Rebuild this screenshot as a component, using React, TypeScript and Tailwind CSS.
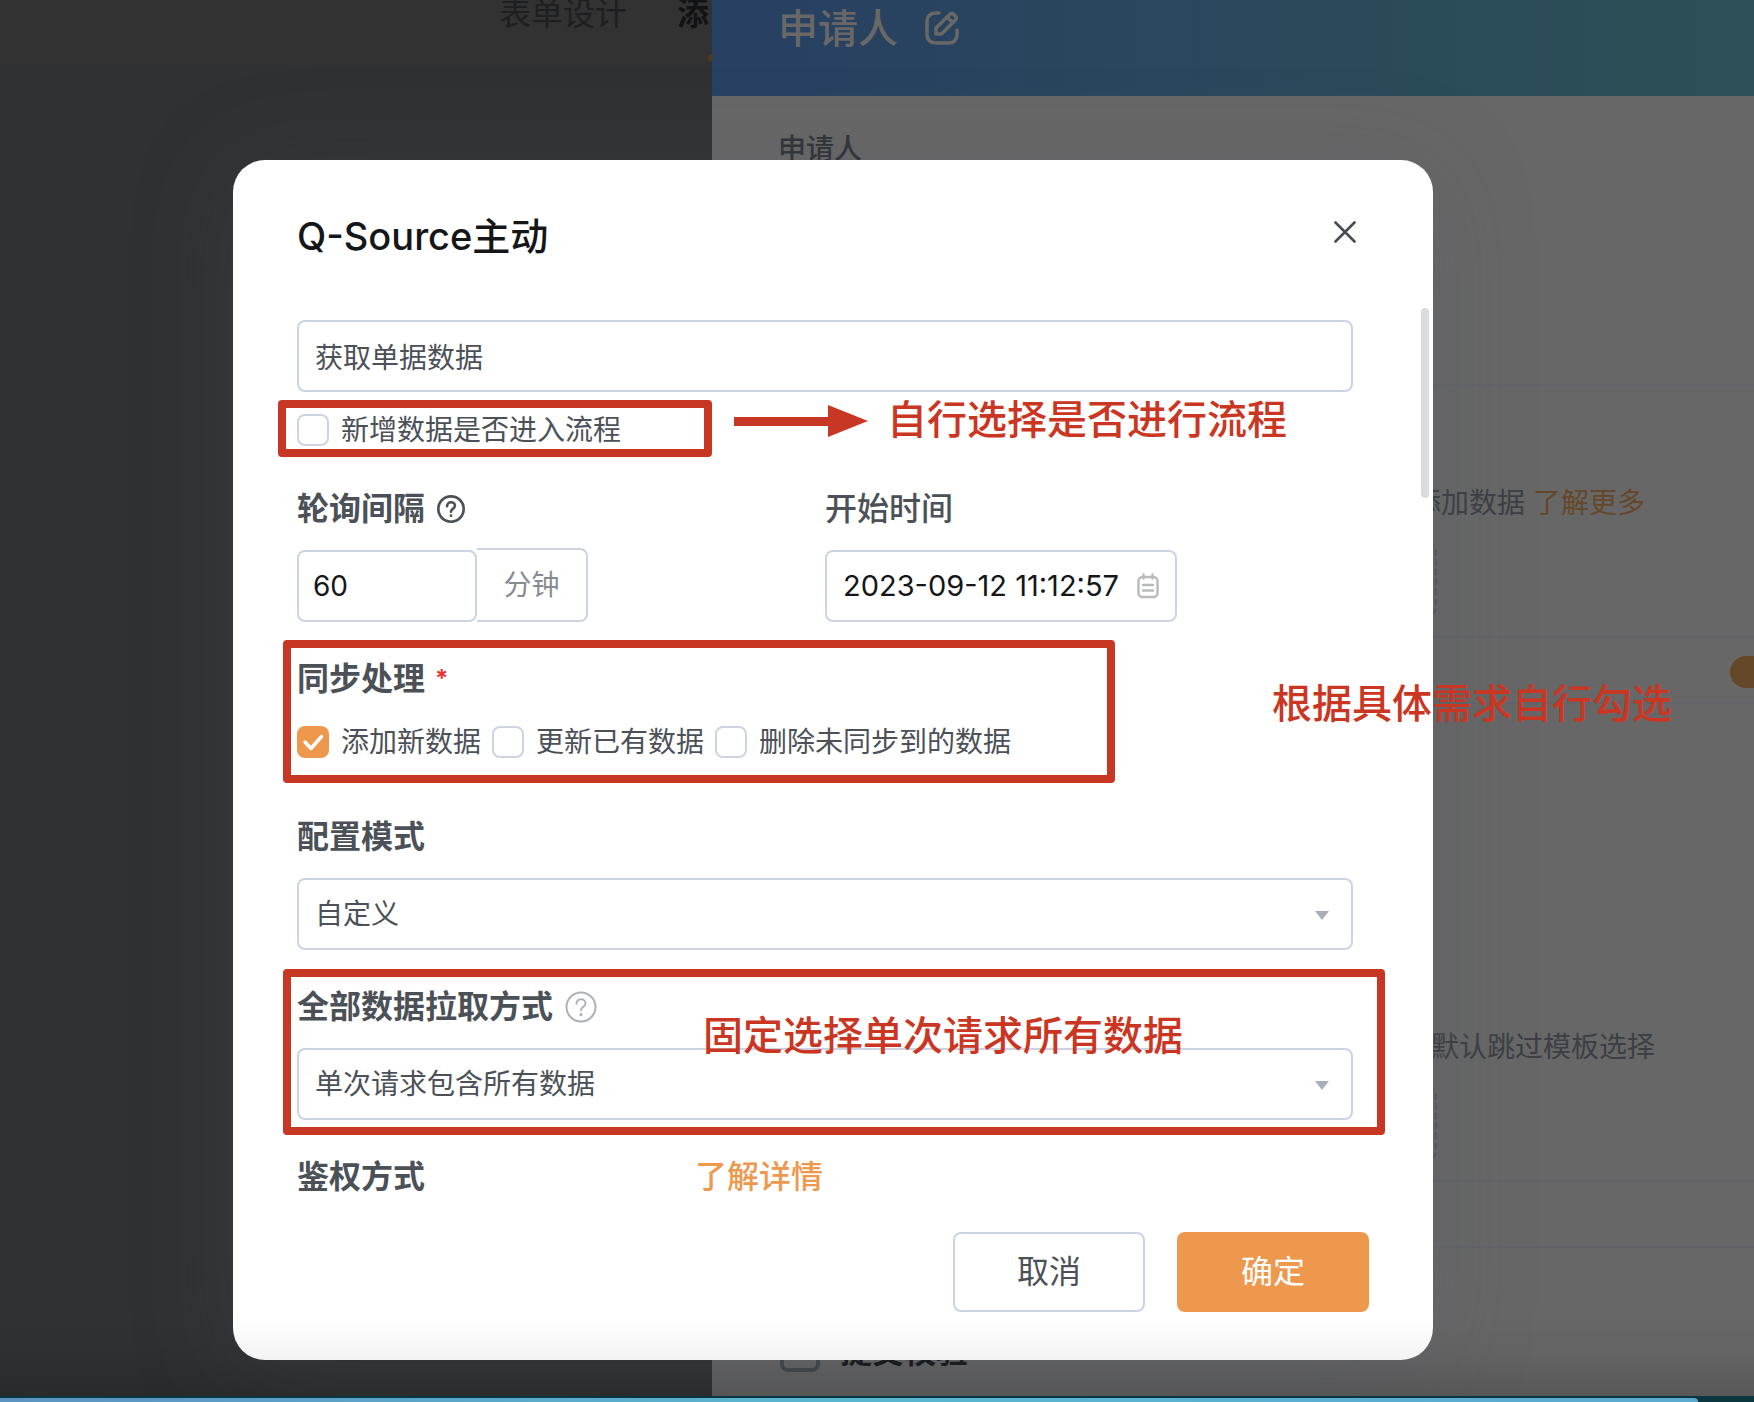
import type { ReactNode } from 'react';

const syncOptions = [
  { id: 'sync-add', label: '添加新数据', checked: true },
  { id: 'sync-update', label: '更新已有数据', checked: false },
  { id: 'sync-delete', label: '删除未同步到的数据', checked: false },
];

const fieldClass =
  'h-[72px] rounded-lg border-2 border-[#cdd3e3] bg-white text-[28px] outline-none';

const HelpIcon = ({ className }: { className: string }) => (
  <svg viewBox="0 0 32 32" fill="none" stroke="currentColor" strokeLinecap="round" className={className}>
    <circle cx="16" cy="16" r="14.5" />
    <path d="M11.5 12.8c0-2.700 2-4.500 4.500-4.500s4.500 1.800 4.500 4.100c0 3.300-4.500 3.500-4.500 6.800" />
    <circle cx="16" cy="23.700" r="1.600" fill="currentColor" stroke="none" />
  </svg>
);

const EditIcon = () => (
  <svg viewBox="0 0 36 36" fill="none" stroke="currentColor" strokeWidth="3.500" strokeLinecap="round" strokeLinejoin="round" className="size-9">
    <path d="M15 3h-4a8 8 0 0 0-8 8v14a8 8 0 0 0 8 8h14a8 8 0 0 0 8-8v-5" />
    <path d="M12 24v-6L26 4.200a2.500 2.500 0 0 1 3.600 0l2 2a2.500 2.500 0 0 1 0 3.600L17.500 24zM23.500 7.500l5 5" />
  </svg>
);

const CalendarIcon = () => (
  <svg viewBox="0 0 22 26" fill="none" stroke="currentColor" strokeWidth="2.400" strokeLinecap="round" className="h-[26px] w-[22px] shrink-0">
    <rect x="1.500" y="4" width="19" height="20" rx="4" />
    <path d="M6.500 1.500v4M15.500 1.500v4M6 12h10M6 17.500h10" />
  </svg>
);

const Checkbox = ({ id, label, checked }: { id: string; label: string; checked: boolean }) => (
  <label htmlFor={id} className="flex items-center gap-3 text-[28px] leading-8 text-[#4b5157]">
    <span className="grid size-8 shrink-0">
      <input
        id={id}
        type="checkbox"
        defaultChecked={checked}
        className="peer col-start-1 row-start-1 size-8 appearance-none rounded-lg border-2 border-[#cdd3e3] bg-white checked:border-[#ee984d] checked:bg-[#ee984d]"
      />
      <svg viewBox="0 0 32 32" fill="none" stroke="white" strokeWidth="3.500" strokeLinecap="round" strokeLinejoin="round" className="pointer-events-none invisible col-start-1 row-start-1 size-8 peer-checked:visible">
        <path d="M8 16l6 6.500L24.500 10.500" />
      </svg>
    </span>
    {label}
  </label>
);

const Select = ({ id, value }: { id: string; value: string }) => (
  <div className="relative">
    <select id={id} className={`${fieldClass} w-full appearance-none px-4 text-[#4b5157]`}>
      <option>{value}</option>
    </select>
    <svg viewBox="0 0 14 9" fill="#a9afb9" className="pointer-events-none absolute top-[33px] right-6 h-[9px] w-3.5">
      <path d="M0 0h14L7 9z" />
    </svg>
  </div>
);

const FieldLabel = ({ htmlFor, children }: { htmlFor?: string; children: ReactNode }) => (
  <label htmlFor={htmlFor} className="block text-[32px] leading-[46px] font-bold text-[#4b5157]">
    {children}
  </label>
);

const Note = ({ className, children }: { className: string; children: ReactNode }) => (
  <p className={`absolute text-[40px] leading-[48px] font-medium whitespace-nowrap text-[#cb3623] ${className}`}>{children}</p>
);

const Backdrop = () => (
  <div className="col-start-1 row-start-1 flex min-w-0 overflow-hidden bg-[#303132]">
    <div className="w-[712px] shrink-0 overflow-hidden">
      <div className="relative flex h-[62px] gap-[50px] bg-[#323233] pl-[499px] text-[32px] leading-7 whitespace-nowrap">
        <span className="text-[#1e1f20]">表单设计</span>
        <span className="font-bold text-[#121314]">添</span>
        <span className="absolute top-[54px] left-[708px] size-2 rounded-full bg-[#50381c]" />
      </div>
    </div>
    <div className="flex flex-1 flex-col bg-[#676767] text-[28px] whitespace-nowrap text-[#3c3f44]">
      <div className="flex h-24 gap-[26px] bg-linear-to-r from-[#284062] via-[#29485c] to-[#2d5056] pl-[66px] text-[40px] leading-[57px] font-medium text-[#696867]">
        申请人
        <div className="pt-2.5"><EditIcon /></div>
      </div>
      <div className="h-[290px] border-b-2 border-[#646568] pt-8 pl-[66px] font-medium text-[#303338]">申请人</div>
      <div className="flex h-[252px] flex-col justify-end border-b-2 border-[#626366] pb-5 pl-[701px]">
        <p className="mb-5">
          添加数据 <a href="#more" className="text-[#65472a]">了解更多</a>
        </p>
        <div className="-ml-[302px] h-[72px] w-[326px] rounded-lg border-2 border-dashed border-[#55585d]" />
      </div>
      <div className="flex h-[66px] justify-end overflow-hidden border-b-2 border-[#636467] pt-[18px]">
        <span className="h-8 w-6 rounded-l-full bg-[#65472a]" />
      </div>
      <div className="flex h-[478px] flex-col justify-end border-b-2 border-[#626366] pb-5 pl-[719px]">
        <p className="mb-5">默认跳过模板选择</p>
        <div className="-ml-[320px] h-[72px] w-[326px] rounded-lg border-2 border-dashed border-[#55585d]" />
      </div>
      <div className="h-[66px] border-b-2 border-[#626366]" />
      <div className="flex items-center gap-5 pt-[84px] pl-[68px] text-[32px] leading-10 font-bold text-[#151617]">
        <span className="size-10 rounded-lg border-4 border-[#44484e]" />
        提交校验
      </div>
    </div>
  </div>
);

const App = () => {
  return (
    <div className="relative grid min-h-screen overflow-hidden font-[Inter,'Noto_Sans_CJK_SC',sans-serif]">
      <Backdrop />
      <div className="relative col-start-1 row-start-1 pt-40 pr-[321px] pb-[42px] pl-[233px]">
        <div role="dialog" aria-labelledby="dialog-title" className="relative rounded-[32px] bg-white pt-12 pb-12 shadow-[0_12px_100px_rgba(82,86,102,0.25)]">
          <div className="flex items-center justify-between pr-[77px] pl-16">
            <h1 id="dialog-title" className="text-[38px] leading-[56px] font-medium text-[#141617]">Q-Source主动</h1>
            <button type="button" aria-label="关闭" className="mb-2 text-[#454b51]">
              <svg viewBox="0 0 22 22" fill="none" stroke="currentColor" strokeWidth="2.600" strokeLinecap="round" className="size-[22px]">
                <path d="M1.500 1.500l19 19M20.500 1.500l-19 19" />
              </svg>
            </button>
          </div>

          <form className="pt-14 pr-20 pl-16">
            <input aria-label="名称" defaultValue="获取单据数据" className={`${fieldClass} mb-[22px] w-full px-4 text-[#4b5157]`} />
            <Checkbox id="enter-flow" label="新增数据是否进入流程" checked={false} />

            <div className="mt-10 grid grid-cols-2">
              <div>
                <div className="mb-4 flex items-center gap-3">
                  <FieldLabel htmlFor="interval">轮询间隔</FieldLabel>
                  <HelpIcon className="size-7 stroke-3 text-[#4b5157]" />
                </div>
                <div className="flex items-end">
                  <input id="interval" defaultValue="60" className={`${fieldClass} w-[180px] px-3.5 text-[#141617]`} />
                  <span className="flex h-[74px] w-[111px] items-center justify-center rounded-r-lg border-2 border-l-0 border-[#cdd3e3] text-[28px] text-[#878b91]">
                    分钟
                  </span>
                </div>
              </div>
              <div>
                <label htmlFor="start-time" className="mb-[18px] block text-[32px] leading-[46px] font-medium text-[#4b5157]">
                  开始时间
                </label>
                <div className={`${fieldClass} flex w-2/3 items-center gap-2.5 px-4 text-[#b9babb]`}>
                  <input id="start-time" defaultValue="2023-09-12 11:12:57" className="min-w-0 flex-1 text-[29px] text-[#141617] outline-none" />
                  <CalendarIcon />
                </div>
              </div>
            </div>

            <div className="mt-[34px] flex gap-2.5">
              <FieldLabel>同步处理</FieldLabel>
              <span className="text-2xl leading-[46px] font-bold text-[#e63434]">*</span>
            </div>
            <div className="mt-6 flex gap-[11px]">
              {syncOptions.map((item) => (
                <Checkbox key={item.id} id={item.id} label={item.label} checked={item.checked} />
              ))}
            </div>

            <div className="mt-14 mb-[18px]">
              <FieldLabel htmlFor="mode">配置模式</FieldLabel>
            </div>
            <Select id="mode" value="自定义" />

            <div className="mt-[34px] mb-[18px] flex items-center gap-3">
              <FieldLabel htmlFor="pull">全部数据拉取方式</FieldLabel>
              <HelpIcon className="size-8 stroke-2 text-[#aeb1b5]" />
            </div>
            <Select id="pull" value="单次请求包含所有数据" />

            <div className="mt-[34px] flex">
              <div className="w-[398px]">
                <FieldLabel>鉴权方式</FieldLabel>
              </div>
              <a href="#detail" className="text-[32px] leading-[46px] font-medium text-[#ee984d]">了解详情</a>
            </div>
          </form>

          <div className="mt-8 flex justify-end gap-8 pr-16 text-[32px]">
            <button type="button" className="h-20 w-48 rounded-lg border-2 border-[#cdd3e3] bg-white text-[#4b5157]">取消</button>
            <button type="button" className="h-20 w-48 rounded-lg bg-[#ee984d] text-white">确定</button>
          </div>

          <div className="absolute top-[148px] right-1 h-[190px] w-2 rounded-full bg-[#dadbdd]" />

          {/* annotations */}
          <div className="pointer-events-none absolute inset-0">
            <div className="absolute top-60 left-[45px] h-[57px] w-[434px] rounded-sm border-8 border-[#c83624]" />
            <svg viewBox="0 0 134 32" fill="#c83624" className="absolute top-[245px] left-[501px] h-8 w-[134px]">
              <path d="M0 12h94V0l40 16-40 16V21H0z" />
            </svg>
            <Note className="top-[236px] left-[654px]">自行选择是否进行流程</Note>
            <div className="absolute top-[480px] left-[50px] h-[143px] w-[832px] rounded-sm border-8 border-[#c83624]" />
            <Note className="top-[520px] left-[1039px]">根据具体需求自行勾选</Note>
            <div className="absolute top-[809px] left-[50px] h-[166px] w-[1102px] rounded-sm border-8 border-[#c83624]" />
            <Note className="top-[852px] left-[470px]">固定选择单次请求所有数据</Note>
          </div>
        </div>
      </div>
      <div className="pointer-events-none absolute inset-x-0 bottom-0">
        <div className="h-20 bg-linear-to-b from-transparent via-black/4 to-black/15" />
        <div className="bg-[#0b3640] pt-0.5 pr-14">
          <div className="h-1 rounded-tr bg-linear-to-r from-[#5b93c0] via-[#58b7d0] to-[#5aa9cf]" />
        </div>
      </div>
    </div>
  );
};

export default App;
